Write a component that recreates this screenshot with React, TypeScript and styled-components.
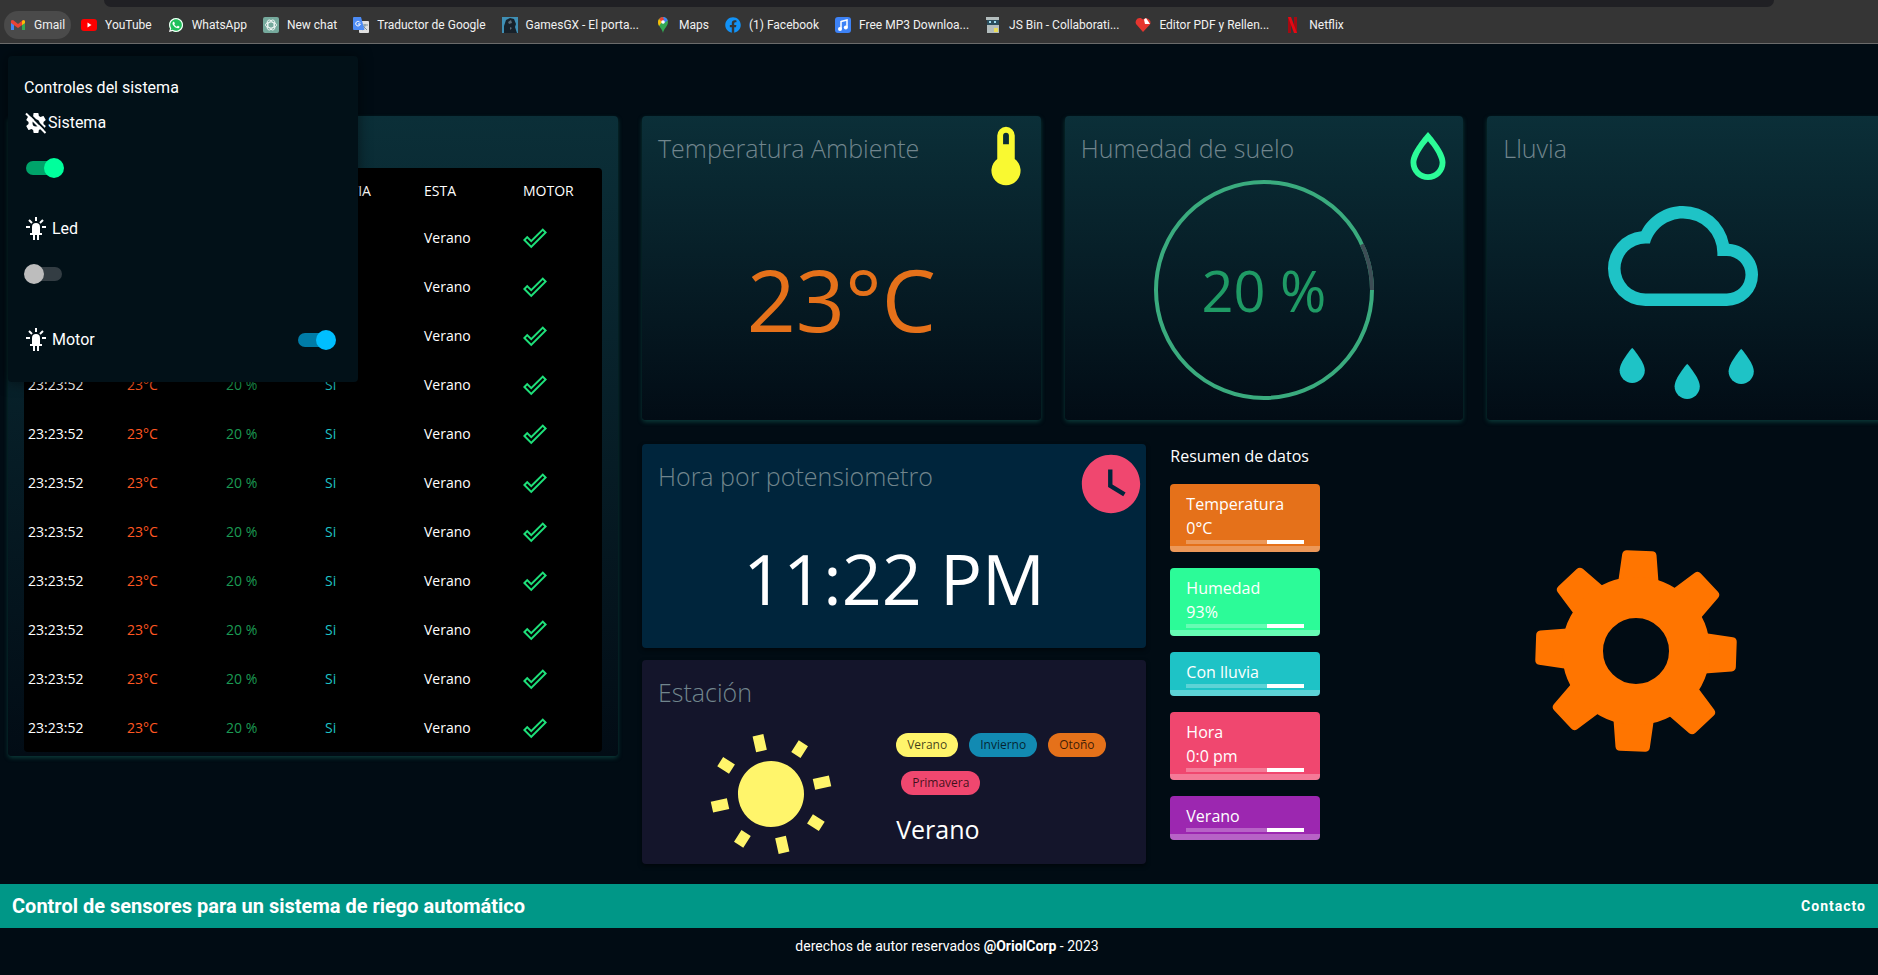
import React, { useState } from "react";
import styled, { createGlobalStyle } from "styled-components";
import { FaWhatsapp, FaFacebook } from "react-icons/fa";

const GlobalStyle = createGlobalStyle`
  *, *::before, *::after { box-sizing: border-box; }
  body {
    margin: 0;
    background: #010c14;
    color: #fff;
    font-family: "Open Sans", "Noto Sans", sans-serif;
  }
  h1, h2, h3, p, ul { margin: 0; padding: 0; }
`;

const ROBOTO = `Roboto, "Liberation Sans", sans-serif`;

/* ---------- browser chrome ---------- */

const BrowserBar = styled.header`
  background: #353535;
  border-bottom: 1px solid #6b6b6b;
  font-family: ${ROBOTO};
`;

const AddressEdge = styled.div`
  height: 7px;
  margin: 0 104px 0 104px;
  background: #202024;
  border-radius: 0 0 10px 10px;
`;

const Bookmarks = styled.nav`
  display: flex;
  align-items: center;
  gap: 4px;
  height: 36px;
  padding: 0 4px;
`;

const Bookmark = styled.a<{ $active?: boolean }>`
  display: flex;
  align-items: center;
  gap: 8px;
  height: 28px;
  padding: 0 6px;
  border-radius: 14px;
  background: ${(p) => (p.$active ? "#4a4a4a" : "transparent")};
  color: #f1f1f1;
  font-size: 12px;
  text-decoration: none;
  white-space: nowrap;
  svg { width: 16px; height: 16px; flex: none; }
`;

/* ---------- page ---------- */

const Page = styled.main`
  position: relative;
  overflow: hidden;
  padding-top: 72px;
`;

const Grid = styled.div`
  display: grid;
  grid-template-columns: repeat(12, minmax(0, 1fr));
  column-gap: 24px;
  width: 100%;
  margin-left: 8px;
  align-items: start;
`;

const Right = styled.div`
  grid-column: span 8;
  display: grid;
  grid-template-columns: repeat(12, minmax(0, 1fr));
  gap: 24px;
  align-items: start;
`;

const Card = styled.section`
  position: relative;
  grid-column: span 4;
  border-radius: 4px;
  background: linear-gradient(#0b2f38, #020c15);
  box-shadow: 0 2px 4px #0b3a38;
`;

const SensorCard = styled(Card)`
  height: 304px;
`;

const PlainCard = styled.section<{ $color: string }>`
  position: relative;
  height: 204px;
  border-radius: 4px;
  background: ${(p) => p.$color};
  box-shadow: 0 2px 4px rgba(0, 0, 0, 0.5);
`;

const CardTitle = styled.h2`
  padding: 16px 16px 2px;
  color: #71858d;
  font-size: 25px;
  font-weight: 300;
  line-height: 32px;
`;

const CornerIcon = styled.svg`
  position: absolute;
  top: 5px;
  right: 0;
  width: 70px;
  height: 70px;
`;

const Reading = styled.p<{ $size: number; $color: string; $height: number }>`
  display: flex;
  align-items: center;
  justify-content: center;
  height: ${(p) => p.$height}px;
  color: ${(p) => p.$color};
  font-size: ${(p) => p.$size}px;
  line-height: 1;
  white-space: nowrap;
`;

/* ---------- history table ---------- */

const TableCard = styled(Card)`
  padding: 52px 16px 4px;
`;

const Table = styled.table`
  width: 100%;
  table-layout: fixed;
  border-collapse: collapse;
  border-radius: 4px;
  background: #000;
  font-size: 14px;
`;

const HeadCell = styled.th<{ $last?: boolean }>`
  width: ${(p) => (p.$last ? "auto" : "99px")};
  height: 45px;
  padding: 0 4px;
  font-weight: 500;
  text-align: left;
`;

const Cell = styled.td<{ $color?: string }>`
  height: 49px;
  padding: 0 4px;
  color: ${(p) => p.$color ?? "#fff"};
  svg { display: block; width: 24px; height: 24px; }
`;

/* ---------- humidity ring ---------- */

const Gauge = styled.div`
  display: grid;
  place-items: center;
  width: 220px;
  margin: 14px auto 0;
  > * { grid-area: 1 / 1; }
  svg { width: 220px; height: 220px; }
`;

const CloudBox = styled.div`
  display: flex;
  flex-direction: column;
  align-items: center;
  padding: 15px 8px 0 0;
`;

const CloudSvg = styled.svg`
  width: 150px;
  height: 220px;
`;

/* ---------- middle column ---------- */

const Middle = styled.div`
  grid-column: span 5;
  display: grid;
  gap: 12px;
`;

const SeasonBody = styled.div`
  display: grid;
  grid-template-columns: 1fr 1fr;
  padding: 18px 0 0 4px;
`;

const SunSvg = styled.svg`
  width: 132px;
  height: 132px;
  margin: 0 auto;
`;

const SeasonInfo = styled.div`
  padding-top: 5px;
`;

const ChipRow = styled.div`
  display: flex;
  gap: 11px;
  & + & { margin: 14px 0 0 5px; }
`;

const Chip = styled.span<{ $color: string }>`
  height: 24px;
  padding: 0 11px;
  border-radius: 12px;
  background: ${(p) => p.$color};
  color: rgba(0, 0, 0, 0.75);
  font-size: 12px;
  line-height: 24px;
`;

const SeasonName = styled.p`
  margin-top: 16px;
  font-size: 25px;
  font-weight: 500;
  line-height: 36px;
`;

/* ---------- summary ---------- */

const Summary = styled.section`
  grid-column: span 2;
  display: flex;
  flex-direction: column;
  gap: 16px;
`;

const SummaryTitle = styled.h2`
  font-size: 16px;
  font-weight: 400;
  line-height: 24px;
  white-space: nowrap;
`;

const SummaryCard = styled.div<{ $color: string }>`
  width: 150px;
  padding: 8px 16px 2px;
  border-bottom: 6px solid rgba(255, 255, 255, 0.28);
  border-radius: 4px;
  background: ${(p) => p.$color};
  font-size: 16px;
  line-height: 24px;
`;

const SummaryBar = styled.div`
  display: flex;
  justify-content: flex-end;
  height: 4px;
  background: rgba(255, 255, 255, 0.28);
  &::after {
    content: "";
    width: 37px;
    background: #fff;
  }
`;

const GearBox = styled.div`
  grid-column: span 5;
  display: flex;
  justify-content: center;
  padding: 105px 0 0 4px;
  svg { width: 204px; height: 204px; }
`;

/* ---------- controls panel ---------- */

const Controls = styled.aside`
  position: absolute;
  z-index: 2;
  top: 12px;
  left: 8px;
  width: 350px;
  height: 326px;
  padding: 20px 16px;
  border-radius: 4px;
  background: #021118;
  box-shadow: 0 0 14px rgba(0, 0, 0, 0.5);
  font-family: ${ROBOTO};
  font-size: 16px;
  line-height: 24px;
`;

const ControlsTitle = styled.h2`
  font-size: 16px;
  font-weight: 400;
  line-height: 24px;
`;

const ControlGroup = styled.div<{ $inline?: boolean; $top: number }>`
  display: flex;
  flex-direction: ${(p) => (p.$inline ? "row" : "column")};
  justify-content: space-between;
  gap: 23px;
  margin-top: ${(p) => p.$top}px;
`;

const ControlLabel = styled.label<{ $gap: number }>`
  display: flex;
  align-items: center;
  gap: ${(p) => p.$gap}px;
  svg { width: 24px; height: 24px; }
`;

const Switch = styled.input<{ $color: string }>`
  appearance: none;
  position: relative;
  display: block;
  flex: none;
  width: 40px;
  height: 20px;
  margin: 0;
  cursor: pointer;
  &::before {
    content: "";
    position: absolute;
    inset: 3px 2px;
    border-radius: 7px;
    background: #333d43;
  }
  &::after {
    content: "";
    position: absolute;
    top: 0;
    left: 0;
    width: 20px;
    height: 20px;
    border-radius: 50%;
    background: #bdbdbd;
  }
  &:checked::before { background: ${(p) => p.$color}; opacity: 0.62; }
  &:checked::after { left: 20px; background: ${(p) => p.$color}; }
`;

const InlineSwitchBox = styled.div`
  padding: 2px 6px 0 0;
`;

/* ---------- footer ---------- */

const Footer = styled.footer`
  margin-top: 20px;
  font-family: ${ROBOTO};
`;

const FooterBar = styled.div`
  display: flex;
  align-items: center;
  justify-content: space-between;
  height: 44px;
  padding: 0 12px;
  background: #009787;
`;

const FooterTitle = styled.h1`
  font-size: 20px;
  font-weight: 700;
`;

const FooterLink = styled.a`
  color: #fff;
  font-size: 14px;
  font-weight: 700;
  letter-spacing: 1px;
  text-decoration: none;
`;

const Copyright = styled.p`
  padding: 8px 0 17px 16px;
  font-size: 14px;
  line-height: 20px;
  text-align: center;
`;

/* ---------- icons ---------- */

const LedIcon = () => (
  <svg viewBox="0 0 24 24" fill="#fff" aria-hidden="true">
    <path d="M11 0v4h2V0h-2m7.3 2.29-3.06 3 1.4 1.42 3.06-3-1.4-1.42m-12.59 0-1.42 1.42 3 3 1.42-1.42-3-3M12 6a4 4 0 0 0-4 4v6H6v2h3v5h2v-5h2v5h2v-5h3v-2h-2v-6a4 4 0 0 0-4-4M2 9v2h4V9H2m16 0v2h4V9h-4Z" />
  </svg>
);

const CogOffIcon = () => (
  <svg viewBox="0 0 24 24" aria-hidden="true">
    <path
      fill="#fff"
      d="M12 15.5A3.5 3.5 0 0 1 8.5 12 3.5 3.5 0 0 1 12 8.500a3.500 3.500 0 0 1 3.500 3.500 3.500 3.500 0 0 1-3.500 3.500m7.430-2.530c.04-.32.07-.64.07-.97s-.03-.66-.07-1l2.110-1.630c.19-.15.24-.42.12-.64l-2-3.460c-.12-.22-.39-.31-.61-.22l-2.490 1c-.52-.39-1.060-.73-1.690-.98l-.37-2.650A.506.506 0 0 0 14 2h-4c-.25 0-.46.18-.5.42l-.37 2.650c-.63.25-1.170.59-1.690.98l-2.490-1c-.22-.09-.49 0-.61.22l-2 3.460c-.13.22-.07.49.12.64L4.570 11c-.04.34-.07.67-.07 1s.03.65.07.97l-2.110 1.660c-.19.15-.25.42-.12.64l2 3.460c.12.22.39.3.61.22l2.490-1.010c.52.4 1.060.74 1.690.99l.37 2.650c.04.24.25.42.5.42h4c.25 0 .46-.18.5-.42l.37-2.650c.63-.26 1.170-.59 1.690-.99l2.490 1.010c.22.08.49 0 .61-.22l2-3.460c.12-.22.07-.49-.12-.64l-2.110-1.660Z"
    />
    <path d="M3.500 1 23 20.500" stroke="#021118" strokeWidth="2" />
    <path d="M2 2.500 21.500 22" stroke="#fff" strokeWidth="2" />
  </svg>
);

const CheckIcon = () => (
  <svg viewBox="0 0 24 24" fill="#1ee07a" role="img" aria-label="Activo">
    <path d="M19.78 2.2 24 6.43 8.22 22.2 0 13.98l4.22-4.22 4 4L19.78 2.2m0 2.8L8.22 16.58l-4-4L2.81 14l5.41 5.41L21.19 6.43 19.78 5Z" />
  </svg>
);

const Sun = () => (
  <SunSvg viewBox="0 0 24 24" fill="#fff56b" aria-hidden="true">
    <path
      transform="translate(0 .5) rotate(-12.500 12 11.500)"
      d="M6.76 4.84l-1.8-1.79-1.41 1.41 1.79 1.79 1.42-1.41zM4 10.5H1v2h3v-2zm9-9.95h-2V3.5h2V.55zm7.45 3.91l-1.41-1.41-1.79 1.79 1.41 1.41 1.79-1.79zm-3.21 13.7l1.79 1.8 1.41-1.41-1.8-1.79-1.4 1.4zM20 10.5v2h3v-2h-3zm-8-5c-3.31 0-6 2.69-6 6s2.69 6 6 6 6-2.69 6-6-2.69-6-6-6zm-1 16.95h2V19.5h-2v2.95zm-7.45-3.91l1.41 1.41 1.79-1.8-1.41-1.41-1.79 1.8z"
    />
  </SunSvg>
);

const Rain = () => (
  <CloudSvg viewBox="0 0 150 220" fill="#1ec3c6" aria-hidden="true">
    <path
      transform="scale(6.25)"
      d="M19 18H6a4 4 0 0 1-4-4 4 4 0 0 1 4-4h.71C7.37 7.69 9.5 6 12 6a5.5 5.5 0 0 1 5.5 5.5v.5H19a3 3 0 0 1 3 3 3 3 0 0 1-3 3m.35-7.970A7.490 7.490 0 0 0 12 4C9.110 4 6.600 5.640 5.350 8.030A6.004 6.004 0 0 0 0 14a6 6 0 0 0 6 6h13a5 5 0 0 0 5-5c0-2.640-2.050-4.780-4.650-4.970Z"
    />
    {[[-1, 161], [54, 177], [108, 162]].map(([x, y]) => (
      <path
        key={x}
        transform={`translate(${x} ${y}) scale(2.100) translate(0 -0.500)`}
        d="M12 20a6 6 0 0 1-6-6c0-4 6-10.750 6-10.750S18 10 18 14a6 6 0 0 1-6 6Z"
      />
    ))}
  </CloudSvg>
);

const Gear = () => (
  <svg viewBox="-309 -309 618 618" aria-hidden="true">
    <g fill="#ff7500">
      {[0, 45, 90, 135, 180, 225, 270, 315].map((a) => (
        <path
          key={a}
          transform={`rotate(${a + 2})`}
          d="M-62-200-52-292Q-50-304-38-304H38Q50-304 52-292L62-200Z"
        />
      ))}
    </g>
    <circle r="162" fill="none" stroke="#ff7500" strokeWidth="124" />
  </svg>
);

const GmailLogo = () => (
  <svg viewBox="0 0 16 16" aria-hidden="true">
    <path d="M1 13V4l3 2v7z" fill="#4285f4" />
    <path d="M12 13V6l3-2v9z" fill="#34a853" />
    <path d="M1 3.500 3 3l5 4 5-4 2 .5V6L8 11 1 6z" fill="#ea4335" />
    <path d="m12 4 1.500-1L15 4v2l-3 2z" fill="#fbbc04" />
  </svg>
);

const YoutubeLogo = () => (
  <svg viewBox="0 0 16 16" aria-hidden="true">
    <rect y="2" width="16" height="12" rx="3" fill="#f00" />
    <path d="M6.500 5.500v5l4-2.500z" fill="#fff" />
  </svg>
);

const WhatsappLogo = () => (
  <svg viewBox="0 0 16 16" aria-hidden="true">
    <circle cx="8" cy="8" r="7" fill="#1fc15b" />
    <FaWhatsapp color="#fff" size={16} />
  </svg>
);

const ChatLogo = () => (
  <svg viewBox="0 0 16 16" aria-hidden="true">
    <rect width="16" height="16" rx="2" fill="#75a99c" />
    <g fill="none" stroke="#fff" strokeWidth=".8">
      {[0, 60, 120].map((a) => (
        <ellipse key={a} cx="8" cy="8" rx="5.500" ry="3" transform={`rotate(${a} 8 8)`} />
      ))}
    </g>
  </svg>
);

const TranslateLogo = () => (
  <svg viewBox="0 0 16 16" aria-hidden="true">
    <rect x="6" y="4" width="10" height="12" rx="1" fill="#e0e0e0" />
    <path d="M9 8h6M12 7v1c0 2-1 4-3 5m1-4 4 4" stroke="#78909c" fill="none" />
    <path d="M1 0h7l3.500 13H1a1 1 0 0 1-1-1V1a1 1 0 0 1 1-1z" fill="#4c8bf5" />
    <path d="M7 5.500A2.300 2.300 0 1 0 7.300 7H5" stroke="#fff" fill="none" />
  </svg>
);

const GamesLogo = () => (
  <svg viewBox="0 0 16 16" aria-hidden="true">
    <rect width="16" height="16" fill="#3f8fb5" />
    <path d="M2 16V9l2-6 4-2 4 1 2 5-1 3 2 6z" fill="#17212a" />
    <path d="m6 5 3-2 1 3-3 1zm2 5 2 1-2 2z" fill="#5c6d78" />
  </svg>
);

const MapsLogo = () => (
  <svg viewBox="0 0 16 16" aria-hidden="true">
    <path d="M8 0a5 5 0 0 0-5 5c0 4 4 6 5 11 1-5 5-7 5-11a5 5 0 0 0-5-5z" fill="#34a853" />
    <path d="M8 0a5 5 0 0 1 4.700 3.500L8 7z" fill="#4285f4" />
    <path d="M4 2a5 5 0 0 1 4-2l1 3-3 2z" fill="#ea4335" />
    <path d="M3 5a5 5 0 0 1 1-3l3 3-3 4a8 8 0 0 1-1-4z" fill="#fbbc04" />
    <circle cx="8" cy="5" r="1.800" fill="#fff" />
  </svg>
);

const MusicLogo = () => (
  <svg viewBox="0 0 16 16" aria-hidden="true">
    <rect width="16" height="16" rx="3" fill="#3d82f6" />
    <path d="M6 4.500 12 3v7.500" stroke="#fff" strokeWidth="1.500" fill="none" />
    <path d="M6 4v8" stroke="#fff" strokeWidth="1.500" />
    <circle cx="5" cy="12" r="2" fill="#fff" />
    <circle cx="10.800" cy="10.500" r="2" fill="#fff" />
  </svg>
);

const JsBinLogo = () => (
  <svg viewBox="0 0 16 16" aria-hidden="true">
    <path d="M1 0h13v3H1zM2 8h12v8H2z" fill="#b3bdbd" />
    <path d="M2 3h12v5H2z" fill="#2b4d5c" />
    <path d="M4 4h2v2H4zm5 0h2v2H9z" fill="#9fdcf0" />
    <path d="M9 11h4v4H9z" fill="#e8dc5a" />
  </svg>
);

const PdfLogo = () => (
  <svg viewBox="0 0 16 16" aria-hidden="true">
    <path d="M8 15 1 7a4 4 0 0 1 0-3.500C2.500 0 6.500.5 8 2.500c2-2 5-1.500 7 1 .7 1.500.6 3 0 4z" fill="#e5352f" />
    <path d="M9 2.500 11 1l4 6h-5z" fill="#fff" />
  </svg>
);

const NetflixLogo = () => (
  <svg viewBox="0 0 16 16" aria-hidden="true">
    <path d="M3 0h3v16l-3 .1zM9 0h3v16H9z" fill="#a30b12" />
    <path d="M3 0h3l6 16H9z" fill="#e50914" />
  </svg>
);

/* ---------- data ---------- */

const bookmarks = [
  { name: "Gmail", icon: <GmailLogo /> },
  { name: "YouTube", icon: <YoutubeLogo /> },
  { name: "WhatsApp", icon: <WhatsappLogo /> },
  { name: "New chat", icon: <ChatLogo /> },
  { name: "Traductor de Google", icon: <TranslateLogo /> },
  { name: "GamesGX - El porta...", icon: <GamesLogo /> },
  { name: "Maps", icon: <MapsLogo /> },
  { name: "(1) Facebook", icon: <FaFacebook color="#1292f6" /> },
  { name: "Free MP3 Downloa...", icon: <MusicLogo /> },
  { name: "JS Bin - Collaborati...", icon: <JsBinLogo /> },
  { name: "Editor PDF y Rellen...", icon: <PdfLogo /> },
  { name: "Netflix", icon: <NetflixLogo /> },
];

const columns = ["HORA", "TEMP", "HUM", "LLUVIA", "ESTA", "MOTOR"];
const rows = Array.from({ length: 11 }, () => ({
  time: "23:23:52",
  temp: "23°C",
  humidity: "20 %",
  rain: "Si",
  season: "Verano",
}));

const summary = [
  { lines: ["Temperatura", "0°C"], color: "#e5711a" },
  { lines: ["Humedad", "93%"], color: "#2cfb98" },
  { lines: ["Con lluvia"], color: "#1ec3c6" },
  { lines: ["Hora", "0:0 pm"], color: "#f0476f" },
  { lines: ["Verano"], color: "#9c27b0" },
];

export default function App() {
  const [system, setSystem] = useState(true);
  const [led, setLed] = useState(false);
  const [motor, setMotor] = useState(true);

  return (
    <>
      <GlobalStyle />
      <BrowserBar>
        <AddressEdge />
        <Bookmarks>
          {bookmarks.map((b, i) => (
            <Bookmark key={b.name} href="#" $active={i === 0}>
              {b.icon}
              {b.name}
            </Bookmark>
          ))}
        </Bookmarks>
      </BrowserBar>

      <Page>
        <Controls>
          <ControlsTitle>Controles del sistema</ControlsTitle>
          <ControlGroup $top={11}>
            <ControlLabel htmlFor="system" $gap={0}>
              <CogOffIcon />
              Sistema
            </ControlLabel>
            <Switch id="system" type="checkbox" role="switch" $color="#00ff9c" checked={system} onChange={(e) => setSystem(e.target.checked)} />
          </ControlGroup>
          <ControlGroup $top={39}>
            <ControlLabel htmlFor="led" $gap={4}>
              <LedIcon />
              Led
            </ControlLabel>
            <Switch id="led" type="checkbox" role="switch" $color="#00ff9c" checked={led} onChange={(e) => setLed(e.target.checked)} />
          </ControlGroup>
          <ControlGroup $inline $top={44}>
            <ControlLabel htmlFor="motor" $gap={4}>
              <LedIcon />
              Motor
            </ControlLabel>
            <InlineSwitchBox>
              <Switch id="motor" type="checkbox" role="switch" $color="#00bfff" checked={motor} onChange={(e) => setMotor(e.target.checked)} />
            </InlineSwitchBox>
          </ControlGroup>
        </Controls>

        <Grid>
          <TableCard>
            <Table>
              <thead>
                <tr>
                  {columns.map((c, i) => (
                    <HeadCell key={c} $last={i === columns.length - 1}>
                      {c}
                    </HeadCell>
                  ))}
                </tr>
              </thead>
              <tbody>
                {rows.map((r, i) => (
                  <tr key={i}>
                    <Cell>{r.time}</Cell>
                    <Cell $color="#ff5722">{r.temp}</Cell>
                    <Cell $color="#1b9a53">{r.humidity}</Cell>
                    <Cell $color="#1ec3c6">{r.rain}</Cell>
                    <Cell>{r.season}</Cell>
                    <Cell>
                      <CheckIcon />
                    </Cell>
                  </tr>
                ))}
              </tbody>
            </Table>
          </TableCard>

          <Right>
            <SensorCard>
              <CardTitle>Temperatura Ambiente</CardTitle>
              <CornerIcon viewBox="0 0 24 24" fill="#f9f931" aria-hidden="true">
                <path d="M15 13V5a3 3 0 0 0-6 0v8a5 5 0 1 0 6 0M12 4a1 1 0 0 1 1 1v3h-2V5a1 1 0 0 1 1-1Z" />
              </CornerIcon>
              <Reading $size={86} $color="#e5711a" $height={266}>
                23°C
              </Reading>
            </SensorCard>

            <SensorCard>
              <CardTitle>Humedad de suelo</CardTitle>
              <CornerIcon viewBox="0 0 24 24" fill="#2cfb98" aria-hidden="true">
                <path d="M12 3.770 11.250 4.610S9.970 6.060 8.680 7.940C7.390 9.820 6 12.070 6 14.230a6 6 0 0 0 12 0c0-2.160-1.390-4.410-2.680-6.290-1.290-1.880-2.570-3.330-2.570-3.330L12 3.770m0 3.130c.44.520.84.950 1.680 2.170 1.210 1.760 2.320 4 2.320 5.160 0 2.220-1.780 4-4 4s-4-1.780-4-4c0-1.160 1.110-3.400 2.320-5.160.84-1.220 1.240-1.650 1.680-2.170Z" />
              </CornerIcon>
              <Gauge>
                <svg viewBox="0 0 220 220" fill="none" strokeWidth="4" aria-hidden="true">
                  <circle cx="110" cy="110" r="108" stroke="#3aab7e" />
                  <path d="M207.900 64.400A108 108 0 0 1 218 110" stroke="#3d4d55" />
                </svg>
                <Reading $size={56} $color="#1f9b65" $height={220}>
                  20 %
                </Reading>
              </Gauge>
            </SensorCard>

            <SensorCard>
              <CardTitle>Lluvia</CardTitle>
              <CloudBox>
                <Rain />
              </CloudBox>
            </SensorCard>

            <Middle>
              <PlainCard $color="#00253c">
                <CardTitle>Hora por potensiometro</CardTitle>
                <CornerIcon viewBox="0 0 24 24" fill="#f0476f" aria-hidden="true">
                  <path d="M12 2C6.500 2 2 6.500 2 12s4.500 10 10 10 10-4.500 10-10S17.500 2 12 2zm4.200 14.200L11 13V7h1.500v5.200l4.500 2.700-.8 1.300z" />
                </CornerIcon>
                <Reading $size={70} $color="#fff" $height={168}>
                  11:22 PM
                </Reading>
              </PlainCard>

              <PlainCard $color="#14152b">
                <CardTitle>Estación</CardTitle>
                <SeasonBody>
                  <Sun />
                  <SeasonInfo>
                    <ChipRow>
                      <Chip $color="#fff56b">Verano</Chip>
                      <Chip $color="#128ab2">Invierno</Chip>
                      <Chip $color="#e5711a">Otoño</Chip>
                    </ChipRow>
                    <ChipRow>
                      <Chip $color="#f0476f">Primavera</Chip>
                    </ChipRow>
                    <SeasonName>Verano</SeasonName>
                  </SeasonInfo>
                </SeasonBody>
              </PlainCard>
            </Middle>

            <Summary>
              <SummaryTitle>Resumen de datos</SummaryTitle>
              {summary.map((s) => (
                <SummaryCard key={s.lines[0]} $color={s.color}>
                  {s.lines.map((line) => (
                    <p key={line}>{line}</p>
                  ))}
                  <SummaryBar />
                </SummaryCard>
              ))}
            </Summary>

            <GearBox>
              <Gear />
            </GearBox>
          </Right>
        </Grid>

        <Footer>
          <FooterBar>
            <FooterTitle>Control de sensores para un sistema de riego automático</FooterTitle>
            <FooterLink href="#">Contacto</FooterLink>
          </FooterBar>
          <Copyright>
            derechos de autor reservados <strong>@OriolCorp</strong> - 2023
          </Copyright>
        </Footer>
      </Page>
    </>
  );
}
